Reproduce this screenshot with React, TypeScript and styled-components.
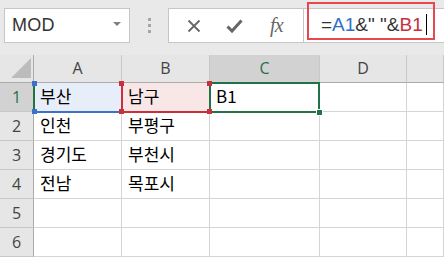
import React from 'react';
import styled, { createGlobalStyle, css } from 'styled-components';

const GlobalStyle = createGlobalStyle`
  html, body {
    margin: 0;
    padding: 0;
    background: #ffffff;
  }
  body {
    font-family: 'Liberation Sans', 'Noto Sans CJK KR', sans-serif;
    overflow: hidden;
  }
`;

const Window = styled.div`
  width: 444px;
  height: 257px;
  display: flex;
  flex-direction: column;
  background: #ffffff;
  overflow: hidden;
`;

const Toolbar = styled.div`
  height: 55px;
  box-sizing: border-box;
  padding: 8px 0 12px 4px;
  background: #e9e9e9;
  display: flex;
  align-items: stretch;
`;

const NameBox = styled.div`
  width: 126px;
  box-sizing: border-box;
  background: #ffffff;
  border: 1px solid #c6c6c6;
  display: flex;
  align-items: center;
  justify-content: space-between;
  padding: 0 8px 0 7px;
  font-size: 18px;
  color: #333333;
  letter-spacing: 0.3px;
`;

const DropArrow = styled.span`
  width: 0;
  height: 0;
  border-left: 4px solid transparent;
  border-right: 4px solid transparent;
  border-top: 4px solid #808080;
  margin-top: -4px;
`;

const Grip = styled.div`
  width: 38px;
  display: flex;
  flex-direction: column;
  align-items: center;
  justify-content: center;
  gap: 3px;
  span {
    width: 3px;
    height: 3px;
    background: #a6a6a6;
  }
`;

const FormulaBar = styled.div`
  flex: 1;
  display: flex;
  background: #ffffff;
  border: 1px solid #c6c6c6;
  border-right: none;
`;

const ButtonGroup = styled.div`
  width: 135px;
  border-right: 1px solid #c6c6c6;
  display: flex;
  align-items: center;
  justify-content: space-around;
  padding: 0 6px 0 4px;
  box-sizing: border-box;
`;

const IconButton = styled.div`
  width: 30px;
  display: flex;
  align-items: center;
  justify-content: center;
  color: #666666;
`;

const Fx = styled.span`
  font-family: 'Liberation Serif', serif;
  font-style: italic;
  font-size: 20px;
  color: #666666;
  letter-spacing: -1px;
`;

const FormulaInput = styled.div`
  position: relative;
  flex: 1;
  display: flex;
  align-items: center;
  padding-left: 17px;
  padding-bottom: 2px;
  font-size: 19px;
  color: #333333;
  white-space: pre;
`;

const Highlight = styled.div`
  position: absolute;
  top: -7px;
  left: 3px;
  right: 9px;
  bottom: 2px;
  border: 2px solid #e8484d;
  pointer-events: none;
`;

const Ref = styled.span<{ $color: string }>`
  color: ${(p) => p.$color};
`;

const Caret = styled.span`
  display: inline-block;
  width: 1px;
  height: 21px;
  background: #000000;
  margin-left: 3px;
`;

const Sheet = styled.div`
  display: grid;
  grid-template-columns: 34px 88px 88px 110px 87px 1fr;
  grid-template-rows: 28px repeat(6, 29px);
`;

const Corner = styled.div`
  background: #e6e6e6;
  border-right: 1px solid #ababab;
  border-bottom: 1px solid #ababab;
  position: relative;
  &::after {
    content: '';
    position: absolute;
    right: 2px;
    bottom: 4px;
    width: 0;
    height: 0;
    border-left: 20px solid transparent;
    border-bottom: 20px solid #bcbcbc;
  }
`;

const ColHead = styled.div<{ $active?: boolean }>`
  background: ${(p) => (p.$active ? '#d2d2d2' : '#e6e6e6')};
  border-right: 1px solid #c8c8c8;
  border-bottom: 1px solid #ababab;
  display: flex;
  align-items: center;
  justify-content: center;
  font-family: 'Open Sans', sans-serif;
  font-size: 16px;
  color: ${(p) => (p.$active ? '#217346' : '#444444')};
  padding-bottom: 1px;
  box-sizing: border-box;
`;

const RowHead = styled.div<{ $active?: boolean }>`
  background: ${(p) => (p.$active ? '#d2d2d2' : '#e6e6e6')};
  border-right: ${(p) => (p.$active ? '2px solid #217346' : '1px solid #ababab')};
  margin-right: ${(p) => (p.$active ? '-1px' : '0')};
  border-bottom: 1px solid #c8c8c8;
  display: flex;
  align-items: center;
  justify-content: center;
  font-family: 'Open Sans', sans-serif;
  font-size: 16px;
  color: ${(p) => (p.$active ? '#217346' : '#444444')};
  box-sizing: border-box;
  position: relative;
  z-index: 2;
`;

type Mark = 'blue' | 'red' | 'active';

const markColors: Record<Mark, string> = {
  blue: '#3b72c7',
  red: '#c8303c',
  active: '#217346',
};

const Cell = styled.div<{ $mark?: Mark }>`
  position: relative;
  border-right: 1px solid #d4d4d4;
  border-bottom: 1px solid #d4d4d4;
  box-sizing: border-box;
  display: flex;
  align-items: center;
  padding: 0 0 4px 6px;
  font-family: 'Noto Sans CJK KR', 'Liberation Sans', sans-serif;
  font-size: 17px;
  color: #000000;
  ${(p) =>
    p.$mark === 'blue' &&
    css`
      background: #e7eef9;
      border-bottom: 2px solid ${markColors.blue};
      margin-bottom: -1px;
    `}
  ${(p) =>
    p.$mark === 'red' &&
    css`
      background: #f9e7e7;
      border-bottom: 2px solid ${markColors.red};
      margin-bottom: -1px;
      box-shadow: inset 2px 0 0 ${markColors.red};
      margin-left: -1px;
      padding-left: 7px;
    `}
  ${(p) =>
    p.$mark === 'active' &&
    css`
      z-index: 3;
      &::after {
        content: '';
        position: absolute;
        top: -1px;
        left: -1px;
        right: -1px;
        bottom: -2px;
        border: 2px solid ${markColors.active};
        pointer-events: none;
      }
    `}
`;

const Handle = styled.span<{ $color: string; $v: 'top' | 'bottom'; $h: 'left' | 'right' }>`
  position: absolute;
  width: 5px;
  height: 5px;
  background: ${(p) => p.$color};
  ${(p) => (p.$v === 'top' ? 'top: -2px;' : 'bottom: -3px;')}
  ${(p) => (p.$h === 'left' ? 'left: -2px;' : 'right: -3px;')}
  z-index: 4;
`;

const FillHandle = styled.span`
  position: absolute;
  right: -4px;
  bottom: -5px;
  width: 5px;
  height: 5px;
  background: #217346;
  border: 1px solid #ffffff;
  z-index: 5;
`;

const columns = ['A', 'B', 'C', 'D', ''];

const data: string[][] = [
  ['부산', '남구', 'B1', '', ''],
  ['인천', '부평구', '', '', ''],
  ['경기도', '부천시', '', '', ''],
  ['전남', '목포시', '', '', ''],
  ['', '', '', '', ''],
  ['', '', '', '', ''],
];

function markOf(r: number, c: number): Mark | undefined {
  if (r !== 0) return undefined;
  if (c === 0) return 'blue';
  if (c === 1) return 'red';
  if (c === 2) return 'active';
  return undefined;
}

export default function App() {
  return (
    <Window>
      <GlobalStyle />
      <Toolbar>
        <NameBox>
          MOD
          <DropArrow />
        </NameBox>
        <Grip>
          <span />
          <span />
          <span />
        </Grip>
        <FormulaBar>
          <ButtonGroup>
            <IconButton>
              <svg width="14" height="14" viewBox="0 0 14 14">
                <path d="M1.5 1.5 L12.5 12.5 M12.5 1.5 L1.5 12.5" stroke="#666" strokeWidth="1.8" fill="none" />
              </svg>
            </IconButton>
            <IconButton>
              <svg width="17" height="14" viewBox="0 0 17 14">
                <path d="M1.5 7.5 L6 12 L15.5 1.5" stroke="#666" strokeWidth="3" fill="none" />
              </svg>
            </IconButton>
            <IconButton>
              <Fx>fx</Fx>
            </IconButton>
          </ButtonGroup>
          <FormulaInput>
            =<Ref $color="#2f6fc6">A1</Ref>&amp;" "&amp;<Ref $color="#c8303c">B1</Ref>
            <Caret />
            <Highlight />
          </FormulaInput>
        </FormulaBar>
      </Toolbar>
      <Sheet>
        <Corner />
        {columns.map((c, i) => (
          <ColHead key={i} $active={c === 'C'}>
            {c}
          </ColHead>
        ))}
        {data.map((row, r) => (
          <React.Fragment key={r}>
            <RowHead $active={r === 0}>{r + 1}</RowHead>
            {row.map((v, c) => {
              const mark = markOf(r, c);
              return (
                <Cell key={c} $mark={mark}>
                  {v}
                  {mark === 'blue' && (
                    <>
                      <Handle $color={markColors.blue} $v="top" $h="left" />
                      <Handle $color={markColors.blue} $v="bottom" $h="left" />
                    </>
                  )}
                  {mark === 'red' && (
                    <>
                      <Handle $color={markColors.red} $v="top" $h="left" />
                      <Handle $color={markColors.red} $v="bottom" $h="left" />
                      <Handle $color={markColors.red} $v="top" $h="right" />
                      <Handle $color={markColors.red} $v="bottom" $h="right" />
                    </>
                  )}
                  {mark === 'active' && <FillHandle />}
                </Cell>
              );
            })}
          </React.Fragment>
        ))}
      </Sheet>
    </Window>
  );
}
